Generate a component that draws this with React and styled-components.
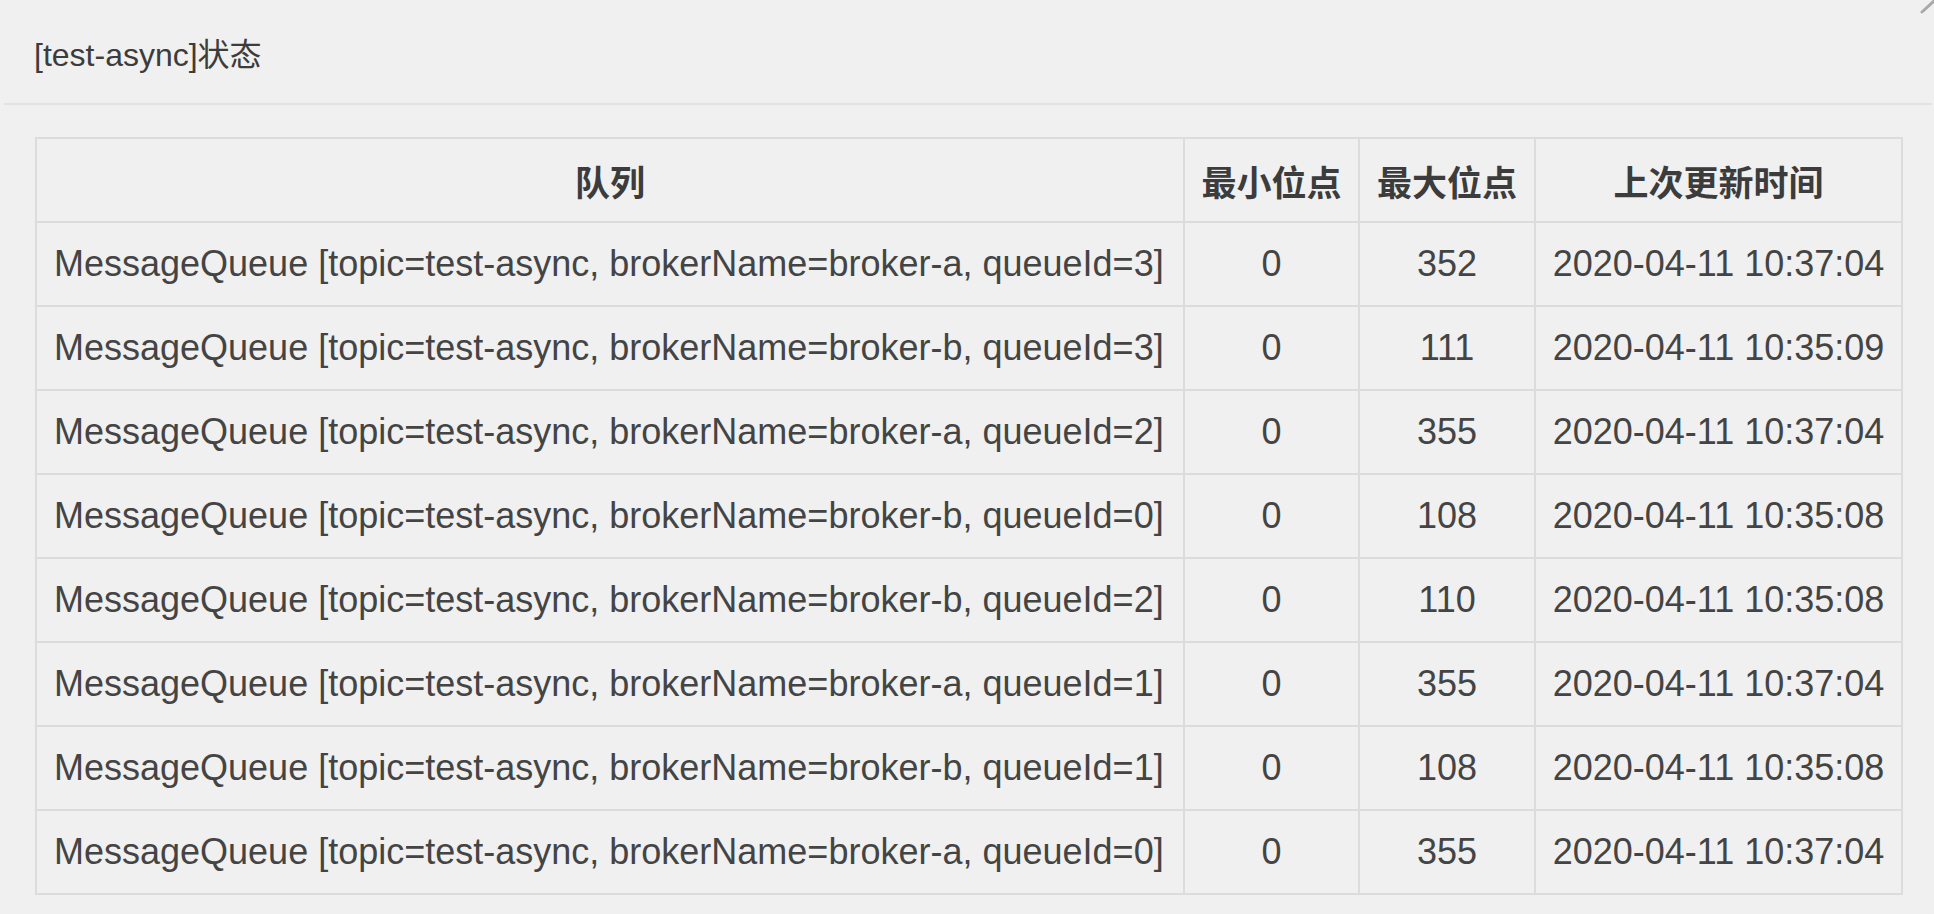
import styled, { createGlobalStyle } from 'styled-components'

const GlobalStyle = createGlobalStyle`
  html, body {
    margin: 0;
    padding: 0;
    background: #f0f0f0;
    overflow: hidden;
  }
  body {
    font-family: 'Liberation Sans', 'Noto Sans CJK SC', Arial, sans-serif;
    color: #3a3a3a;
  }
`

const Modal = styled.div`
  position: relative;
  margin-left: 4px;
  width: 1928px;
  height: 914px;
  background: #f0f0f0;
`

const Header = styled.div`
  display: flex;
  align-items: center;
  height: 103px;
  padding: 0 30px;
  border-bottom: 2px solid #e2e2e2;
`

const Title = styled.h4`
  margin: 0;
  font-size: 32px;
  font-weight: normal;
  color: #3c3c3c;
`

const CloseMark = styled.svg`
  position: absolute;
  top: 0;
  right: -4px;
  width: 16px;
  height: 14px;
`

const Body = styled.div`
  padding: 32px 31px 0 31px;
`

const Table = styled.table`
  width: 1866px;
  border-collapse: collapse;
  border: 2px solid #dcdcdc;
  table-layout: fixed;
`

const Cell = styled.td`
  height: 82px;
  padding: 0 ${({ $align }) => ($align === 'left' ? '17px' : '4px')};
  border: 2px solid #dcdcdc;
  font-size: 36px;
  text-align: ${({ $align }) => $align || 'center'};
  white-space: nowrap;
  color: #444444;
`

const HeadCell = styled.th`
  height: 82px;
  padding: 0 4px;
  border: 2px solid #dcdcdc;
  font-family: 'Noto Sans CJK SC', sans-serif;
  font-size: 35px;
  font-weight: bold;
  text-align: center;
  white-space: nowrap;
  color: #3c3c3c;
`

const rows = [
  ['broker-a', 3, 352, '2020-04-11 10:37:04'],
  ['broker-b', 3, 111, '2020-04-11 10:35:09'],
  ['broker-a', 2, 355, '2020-04-11 10:37:04'],
  ['broker-b', 0, 108, '2020-04-11 10:35:08'],
  ['broker-b', 2, 110, '2020-04-11 10:35:08'],
  ['broker-a', 1, 355, '2020-04-11 10:37:04'],
  ['broker-b', 1, 108, '2020-04-11 10:35:08'],
  ['broker-a', 0, 355, '2020-04-11 10:37:04'],
]

function App() {
  return (
    <Modal>
      <GlobalStyle />
      <Header>
        <Title>[test-async]状态</Title>
      </Header>
      <CloseMark viewBox="0 0 16 14">
        <line x1="2" y1="12" x2="14" y2="1" stroke="#a8a8a8" strokeWidth="3" strokeLinecap="round" />
      </CloseMark>
      <Body>
        <Table>
          <colgroup>
            <col style={{ width: 1148 }} />
            <col style={{ width: 175 }} />
            <col style={{ width: 176 }} />
            <col style={{ width: 367 }} />
          </colgroup>
          <thead>
            <tr>
              <HeadCell>队列</HeadCell>
              <HeadCell>最小位点</HeadCell>
              <HeadCell>最大位点</HeadCell>
              <HeadCell>上次更新时间</HeadCell>
            </tr>
          </thead>
          <tbody>
            {rows.map(([broker, id, max, time]) => (
              <tr key={`${broker}-${id}`}>
                <Cell $align="left">
                  MessageQueue [topic=test-async, brokerName={broker}, queueId={id}]
                </Cell>
                <Cell>0</Cell>
                <Cell>{max}</Cell>
                <Cell>{time}</Cell>
              </tr>
            ))}
          </tbody>
        </Table>
      </Body>
    </Modal>
  )
}

export default App
